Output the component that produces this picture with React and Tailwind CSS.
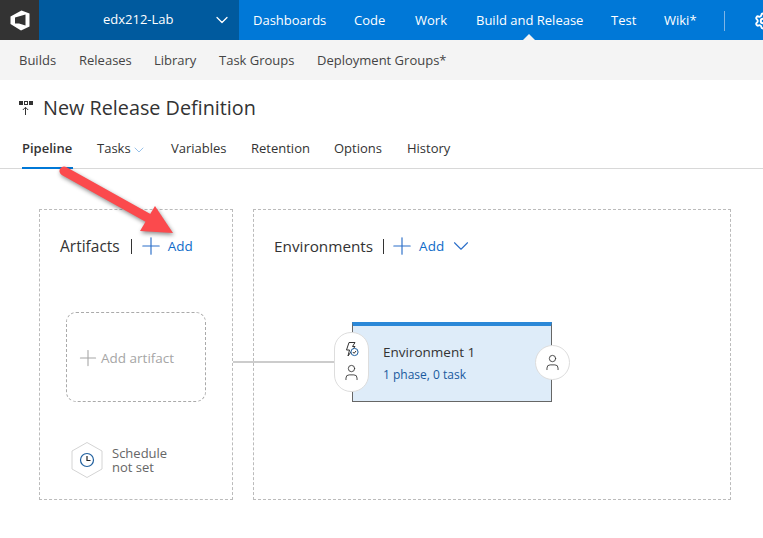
import React from 'react';
import { ChevronDown, Plus, Settings, User } from 'lucide-react';

const topLinks = [
  { label: 'Dashboards', w: 'w-[101px]' },
  { label: 'Code', w: 'w-[61px]' },
  { label: 'Work', w: 'w-[61px]' },
  { label: 'Build and Release', w: 'w-[135px]', active: true },
  { label: 'Test', w: 'w-[53px]' },
  { label: 'Wiki*', w: 'w-[60px]' },
];

const subLinks = [
  { label: 'Builds', w: 'w-[60px]' },
  { label: 'Releases', w: 'w-[75px]' },
  { label: 'Library', w: 'w-[65px]' },
  { label: 'Task Groups', w: 'w-[98px]' },
  { label: 'Deployment Groups*', w: 'w-[140px]' },
];

const tabs = [
  { label: 'Pipeline', w: 'w-[75px]', active: true },
  { label: 'Tasks', w: 'w-[74px]', caret: true },
  { label: 'Variables', w: 'w-[80px]' },
  { label: 'Retention', w: 'w-[83px]' },
  { label: 'Options', w: 'w-[73px]' },
  { label: 'History', w: 'w-[60px]' },
];

function Logo() {
  return (
    <svg width="20" height="21" viewBox="0 0 20 21" fill="none">
      <path
        fillRule="evenodd"
        d="M11.5 0.5 19.5 3.5V16.5L11 20.5 0.5 14V6.5L11.5 0.5ZM5 7.5 15.5 4.5V15.5L9 13.5H5V7.5Z"
        fill="#fff"
      />
    </svg>
  );
}

function ReleaseIcon() {
  return (
    <svg width="15" height="15" viewBox="0 0 15 15" fill="none">
      <rect x="0" y="0" width="4" height="4" fill="#333" />
      <rect x="5.5" y="0.5" width="3" height="3" stroke="#333" />
      <rect x="10" y="0" width="4" height="4" fill="#333" />
      <path d="M6.5 14V6.5M3.8 9 6.5 6.3 9.2 9" stroke="#333" strokeWidth="1" />
    </svg>
  );
}

function TriggerIcon() {
  return (
    <svg width="15" height="15" viewBox="0 0 15 15" fill="none" stroke="#333" strokeWidth="1">
      <path d="M5 0.5h6L8.5 4.5H11L4 14 5.5 8H2.5z" />
      <circle cx="10.5" cy="10" r="3.6" fill="#fff" stroke="#1f5f9e" />
      <path d="m8.8 10 1.3 1.3 2-2.4" />
    </svg>
  );
}

function ScheduleBadge() {
  return (
    <svg width="32" height="36" viewBox="0 0 32 36" fill="none">
      <path d="M16 .5 31 9v18l-15 8.5L1 27V9z" fill="#fff" stroke="#d4d4d4" />
      <circle cx="16" cy="18" r="6.5" stroke="#1f5f9e" strokeWidth="1.2" />
      <path d="M16 14v4.5h3.5" stroke="#222" strokeWidth="1.2" />
    </svg>
  );
}

function Arrow() {
  return (
    <svg className="absolute left-0 top-0 pointer-events-none drop-shadow-[1px_2px_2px_rgba(0,0,0,0.45)]" width="763" height="538" viewBox="0 0 763 538" fill="none">
      <path d="M64 171 150 219" stroke="#fb4a4d" strokeWidth="9" strokeLinecap="round" />
      <path d="M155 206 173 233 140 231z" fill="#fb4a4d" />
    </svg>
  );
}

function AddButton() {
  return (
    <>
      <Plus size={28} strokeWidth={1} className="text-[#2b6fc9]" />
      <span className="ml-[3px] text-[13.5px] text-[#0f6cc9]">Add</span>
    </>
  );
}

export default function App() {
  return (
    <div className="relative w-[763px] h-[538px] overflow-hidden bg-white text-[#333] font-['Open_Sans',sans-serif] text-[13px]">
      {/* Top bar */}
      <div className="flex h-10 overflow-hidden bg-[#0078d7] pt-[1px] text-white">
        <div className="mt-[-1px] flex w-[39px] shrink-0 items-center justify-center bg-[#333]">
          <Logo />
        </div>
        <div className="mt-[-1px] flex w-[200px] shrink-0 items-center bg-[#005a9e] pl-[64px]">
          <span className="w-[109px]">edx212-Lab</span>
          <ChevronDown size={20} strokeWidth={1.5} />
        </div>
        <div className="flex shrink-0 pl-[14px]">
          {topLinks.map((link) => (
            <div key={link.label} className={`relative flex items-center ${link.w}`}>
              {link.label}
              {link.active && (
                <div className="absolute bottom-0 left-[47px] h-0 w-0 border-x-[6px] border-b-[6px] border-x-transparent border-b-[#f4f4f4]" />
              )}
            </div>
          ))}
        </div>
        <div className="mt-[10px] h-[20px] w-px shrink-0 bg-[#7fb5e6]" />
        <div className="flex shrink-0 items-center pl-[29px]">
          <Settings size={18} strokeWidth={2.5} />
        </div>
      </div>

      {/* Sub nav */}
      <div className="flex h-10 items-center bg-[#f4f4f4] pl-[19px] pt-[1px] text-[#444]">
        {subLinks.map((link) => (
          <div key={link.label} className={link.w}>{link.label}</div>
        ))}
      </div>

      {/* Title */}
      <div className="flex h-[56px] items-center gap-[9px] pl-[19px]">
        <ReleaseIcon />
        <h1 className="text-[19.8px] text-[#333]">New Release Definition</h1>
      </div>

      {/* Tabs */}
      <div className="flex h-[33px] border-b border-[#d8d8d8] pl-[22px]">
        {tabs.map((tab) => (
          <div key={tab.label} className={`relative flex items-start pt-[3px] ${tab.w}`}>
            <span className={tab.active ? 'font-semibold' : ''}>{tab.label}</span>
            {tab.caret && <ChevronDown size={16} strokeWidth={1.2} className="mt-[3px] text-[#7fb2e5]" />}
            {tab.active && <div className="absolute bottom-[-1px] left-0 h-[2px] w-[51px] bg-[#0078d7]" />}
          </div>
        ))}
      </div>

      {/* Panels */}
      <div className="relative flex gap-[20px] pl-[39px] pt-[40px]">
        <div className="absolute left-[233px] top-[192px] h-[2px] w-[102px] bg-[#ccc]" />

        <div className="relative flex h-[291px] w-[194px] flex-col border border-dashed border-[#bbb] pl-[20px] pt-[26px]">
          <div className="flex h-[20px] items-center">
            <span className="text-[15.5px] font-medium leading-[20px]">Artifacts</span>
            <div className="ml-[11px] mr-[5px] h-[15px] w-px bg-[#333]" />
            <AddButton />
          </div>
          <div className="ml-[6px] mt-[56px] flex h-[90px] w-[140px] items-center rounded-[10px] border border-dashed border-[#aaa] pl-[8px] pt-[2px] text-[13.5px] text-[#a6a6a6]">
            <Plus size={26} strokeWidth={1} />
            <span>Add artifact</span>
          </div>
          <div className="ml-[11px] mt-[40px] flex items-center gap-[9px]">
            <ScheduleBadge />
            <div className="leading-[14px] text-[#666]">Schedule<br />not set</div>
          </div>
        </div>

        <div className="flex h-[291px] w-[478px] flex-col border border-dashed border-[#bbb] pl-[20px] pt-[26px]">
          <div className="flex h-[20px] items-center">
            <span className="text-[15.3px] font-medium leading-[20px] mt-[-1px]">Environments</span>
            <div className="ml-[10px] mr-[4px] h-[15px] w-px bg-[#333]" />
            <AddButton />
            <ChevronDown size={26} strokeWidth={1} className="ml-[4px] text-[#2b6fc9]" />
          </div>
          <div className="relative ml-[78px] mt-[66px] flex h-[80px] w-[200px] flex-col justify-center gap-[6px] border border-t-[4px] border-[#666] border-t-[#2b88d8] bg-[#deecf9] pb-[2px] pl-[30px]">
            <div className="text-[13.5px] font-medium leading-[18px]">Environment 1</div>
            <div className="text-[12px] leading-[16px] text-[#1a5a9e]">1 phase, 0 task</div>
            <div className="absolute left-[-19px] top-[6px] flex h-[60px] w-[35px] flex-col items-center justify-center gap-[6px] rounded-[17px] border border-[#ddd] bg-white">
              <TriggerIcon />
              <User size={19} strokeWidth={1.1} />
            </div>
            <div className="absolute right-[-19px] top-[19px] flex h-[35px] w-[35px] items-center justify-center rounded-full border border-[#ddd] bg-white">
              <User size={19} strokeWidth={1.1} />
            </div>
          </div>
        </div>
      </div>

      <Arrow />
    </div>
  );
}
